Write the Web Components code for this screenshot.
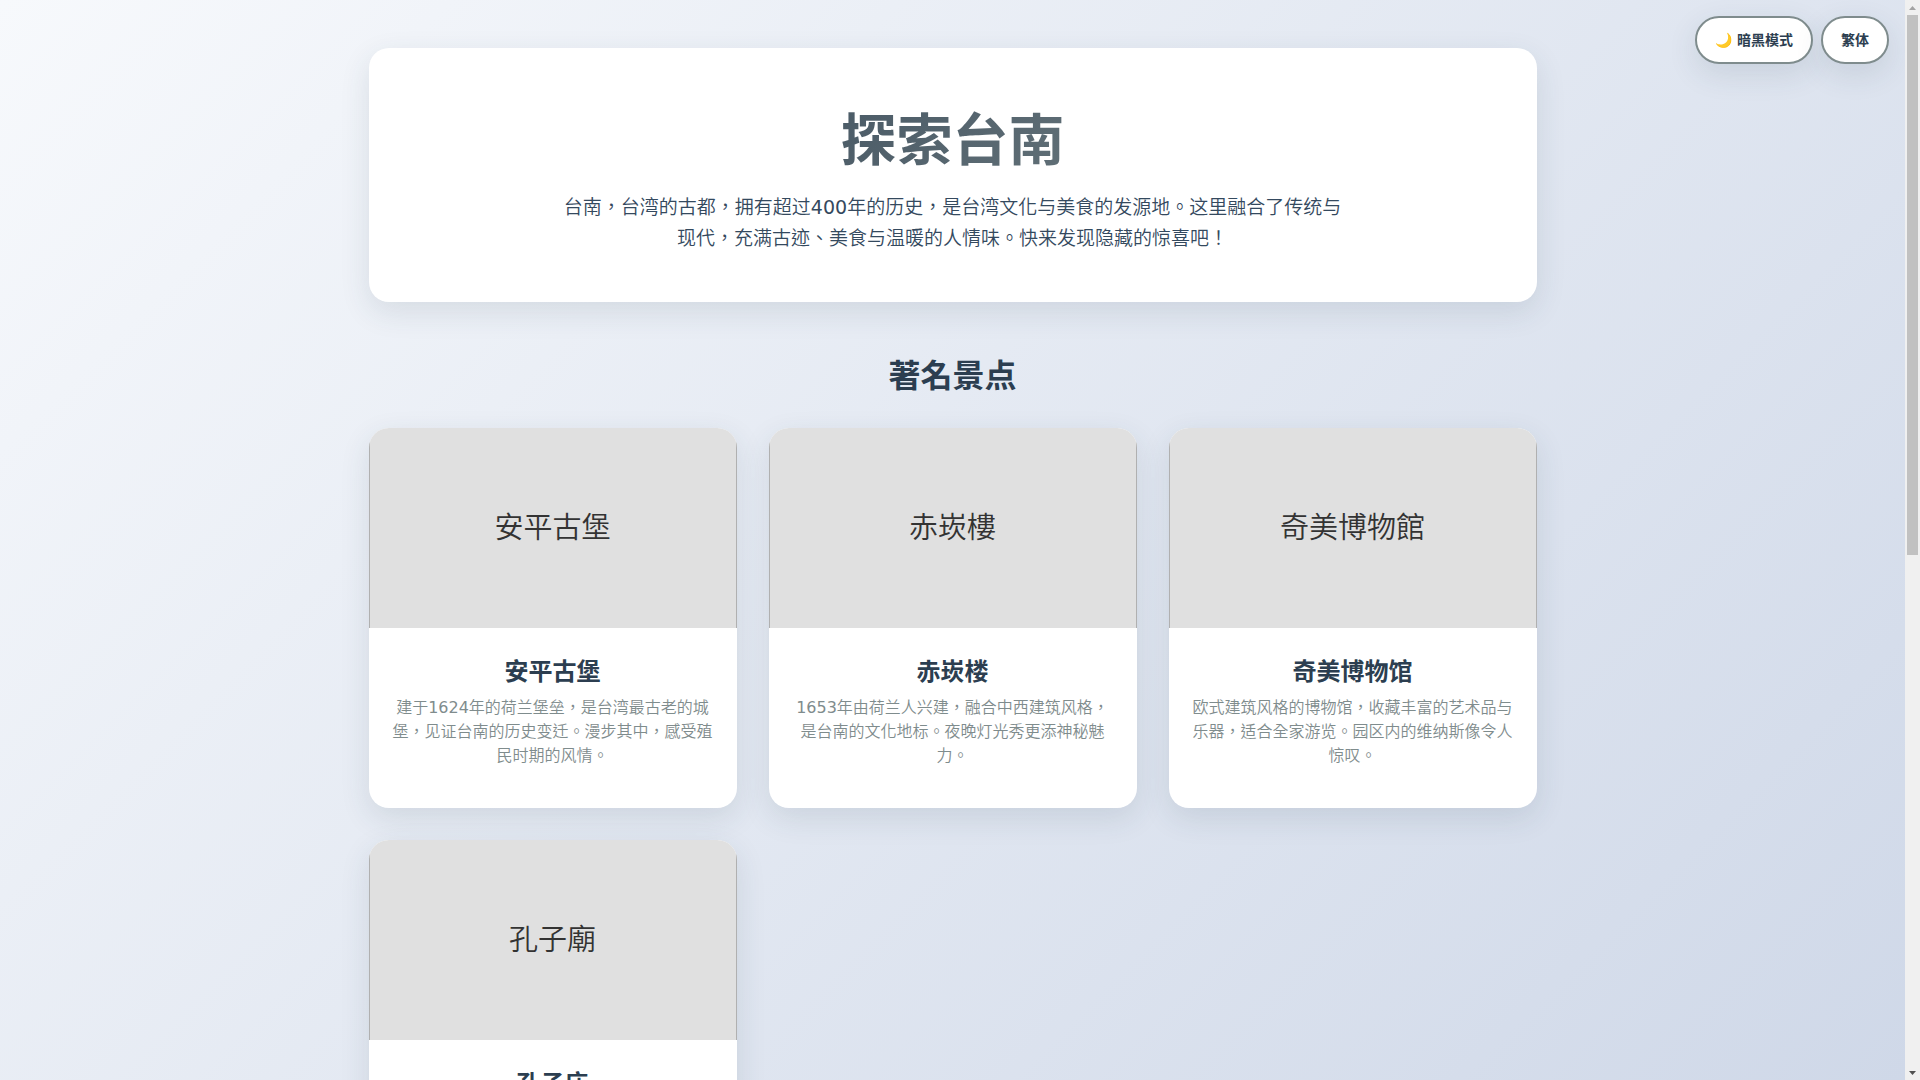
<!DOCTYPE html>
<html lang="zh-TW">
<head>
<meta charset="utf-8">
<meta name="viewport" content="width=device-width, initial-scale=1">
<title>探索台南</title>
<style>
  html { height: 100%; }
  body {
    margin: 0;
    height: 100%;
    overflow: hidden;
    --heading-font: "DejaVu Sans", "Noto Sans CJK TC", sans-serif;
    font-family: "DejaVu Sans", "Noto Sans CJK TC DemiLight", "Noto Sans CJK TC", sans-serif;
    color: #2c3e50;
  }
</style>
</head>
<body>
<tainan-page></tainan-page>
<script>
const define = (name, html) => customElements.define(name, class extends HTMLElement {
  constructor() {
    super();
    const t = document.createElement('template');
    t.innerHTML = html;
    this.attachShadow({ mode: 'open' }).append(t.content.cloneNode(true));
  }
});

define('pill-button', `
<style>
  :host { display: block; }
  button {
    display: block; margin: 0; padding: 12px 18px;
    font-family: var(--heading-font); font-weight: bold; font-size: 14px; line-height: 20px;
    color: #2c3e50; background: #fff;
    border: 2px solid #7f8c8d; border-radius: 25px;
    box-shadow: 0 10px 30px rgba(44, 62, 80, .12); cursor: pointer;
  }
</style>
<button type="button"><slot></slot></button>`);

define('page-hero', `
<style>
  :host {
    display: block; padding: 48px; border-radius: 20px; background: #fff;
    box-shadow: 0 10px 30px rgba(44, 62, 80, .12); text-align: center;
  }
  h1 {
    margin: 0 0 6px; font-family: var(--heading-font); font-size: 56px; line-height: 90px;
    background: linear-gradient(135deg, #2c3e50, #7f8c8d);
    -webkit-background-clip: text; background-clip: text; color: transparent;
  }
  p { margin: 0 auto; max-width: 790px; font-size: 19px; line-height: 31px; color: #34495e; }
</style>
<h1><slot name="title"></slot></h1>
<p><slot></slot></p>`);

define('spot-card', `
<style>
  :host {
    display: flex; flex-direction: column; overflow: hidden;
    border-radius: 20px; background: #fff; text-align: center;
    box-shadow: 0 10px 30px rgba(44, 62, 80, .12);
  }
  .photo {
    box-sizing: border-box; height: 200px; display: grid; place-items: center;
    background: #e0e0e0; border: solid #b0b0b0; border-width: 0 1px;
    font-size: 29px; line-height: 44px; color: #333;
  }
  .text { padding: 24px 24px 40px; }
  h3 { margin: 0 0 4px; font-family: var(--heading-font); font-size: 24px; line-height: 40px; }
  p { margin: 0; font-size: 16px; line-height: 24px; color: #7f8c8d; }
</style>
<div class="photo"><slot name="photo"></slot></div>
<div class="text">
  <h3><slot name="name"></slot></h3>
  <p><slot></slot></p>
</div>`);

define('scroll-rail', `
<style>
  :host { box-sizing: border-box; display: flex; flex-direction: column; align-items: center;
    flex: none; width: 15px; padding: 0 2px; background: #f0f0f0; }
  svg { display: block; flex: none; width: 11px; height: 15px; }
  .track { flex: 1; align-self: stretch; }
  .thumb { height: 51.4%; background: #c1c1c1; }
</style>
<svg viewBox="0 0 11 15" aria-hidden="true"><path d="M2 10 5.500 6 9 10z" fill="#a3a3a3"/></svg>
<div class="track"><div class="thumb"></div></div>
<svg viewBox="0 0 11 15" aria-hidden="true"><path d="M2 6 5.500 10 9 6z" fill="#505050"/></svg>`);

define('tainan-page', `
<style>
  :host { display: flex; height: 100%; }
  .view {
    flex: 1; min-width: 0; position: relative; overflow-y: auto; scrollbar-width: none;
    background: linear-gradient(135deg, #f7f9fc, #cfd8e8);
  }
  nav { position: absolute; top: 16px; right: 16px; display: flex; gap: 8px; }
  main { max-width: 1168px; margin: 0 auto; padding: 48px 16px; }
  h2 { margin: 48px 0 26px; font-family: var(--heading-font); font-size: 32px; line-height: 52px; text-align: center; }
  .grid { display: grid; grid-template-columns: repeat(3, 1fr); gap: 32px; }
</style>
<div class="view">
  <nav>
    <pill-button>🌙 暗黑模式</pill-button>
    <pill-button>繁体</pill-button>
  </nav>
  <main>
    <page-hero>
      <span slot="title">探索台南</span>
      台南，台湾的古都，拥有超过400年的历史，是台湾文化与美食的发源地。这里融合了传统与现代，充满古迹、美食与温暖的人情味。快来发现隐藏的惊喜吧！
    </page-hero>
    <h2>著名景点</h2>
    <div class="grid">
      <spot-card><span slot="photo">安平古堡</span><span slot="name">安平古堡</span>建于1624年的荷兰堡垒，是台湾最古老的城堡，见证台南的历史变迁。漫步其中，感受殖民时期的风情。</spot-card>
      <spot-card><span slot="photo">赤崁樓</span><span slot="name">赤崁楼</span>1653年由荷兰人兴建，融合中西建筑风格，是台南的文化地标。夜晚灯光秀更添神秘魅力。</spot-card>
      <spot-card><span slot="photo">奇美博物館</span><span slot="name">奇美博物馆</span>欧式建筑风格的博物馆，收藏丰富的艺术品与乐器，适合全家游览。园区内的维纳斯像令人惊叹。</spot-card>
      <spot-card><span slot="photo">孔子廟</span><span slot="name">孔子庙</span></spot-card>
    </div>
  </main>
</div>
<scroll-rail></scroll-rail>`);
</script>
</body>
</html>
